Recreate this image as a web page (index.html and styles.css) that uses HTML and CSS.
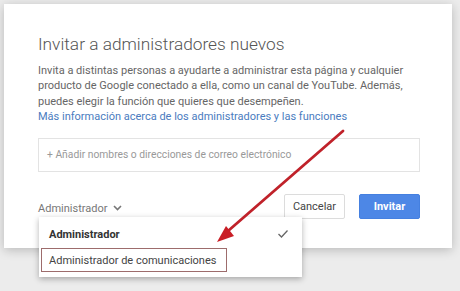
FILE: index.html
```html
<!DOCTYPE html>
<html>
<head lang="es">
    <meta charset="UTF-8">
    <title>Invitar a administradores nuevos</title>
    <link rel="stylesheet" href="styles.css">
</head>
<body>
<main class="dialog">
    <h1 class="title">Invitar a administradores nuevos</h1>
    <p class="intro">
        Invita a distintas personas a ayudarte a administrar esta página y cualquier<br>
        producto de Google conectado a ella, como un canal de YouTube. Además,<br>
        puedes elegir la función que quieres que desempeñen.
        <a class="more" href="#">Más información acerca de los administradores y las funciones</a>
    </p>
    <div class="invitees">+ Añadir nombres o direcciones de correo electrónico</div>
    <div class="actions">
        <div class="role">
            Administrador
            <svg class="chevron" width="9" height="6" viewBox="0 0 9 6">
                <polyline points="1,1 4.5,4.5 8,1" fill="none" stroke="#777" stroke-width="1.6"/>
            </svg>
        </div>
        <button class="btn cancel">Cancelar</button>
        <button class="btn invite">Invitar</button>
    </div>
    <ul class="menu">
        <li class="item selected">
            Administrador
            <svg class="check" width="12" height="10" viewBox="0 0 12 10">
                <polyline points="1.5,5 4.5,8 10.5,1.5" fill="none" stroke="#666" stroke-width="1.3"/>
            </svg>
        </li>
        <li class="item boxed">Administrador de comunicaciones</li>
    </ul>
</main>
<svg class="pointer" width="460" height="291" viewBox="0 0 460 291">
    <line x1="343" y1="131" x2="228" y2="231" stroke="#c0222a" stroke-width="2.8" stroke-linecap="round"/>
    <polygon points="217,242 234,236 226,226" fill="#c91e26"/>
</svg>
</body>
</html>
```

FILE: styles.css
```css
body{
    margin: 0;
    background-color: #ececec;
    font-family: Roboto, "Liberation Sans", sans-serif;
    height: 291px;
    overflow: hidden;
}
.dialog{
    position: relative;
    box-sizing: border-box;
    width: 448px;
    height: 244px;
    margin: 4px 0 0 4px;
    padding: 28px 32px 0 34px;
    background-color: #fff;
    box-shadow: 0 2px 10px rgba(0, 0, 0, 0.22);
}
.title{
    margin: 0;
    font-size: 17.3px;
    line-height: 24px;
    font-weight: 300;
    color: #555;
    white-space: nowrap;
}
.intro{
    margin: 7px 0 0 0;
    font-size: 11px;
    line-height: 15.3px;
    color: #666;
    white-space: nowrap;
}
.more{
    display: block;
    color: #4a7cc0;
    text-decoration: none;
}
.invitees{
    box-sizing: border-box;
    height: 34px;
    margin-top: 14px;
    padding: 0 8px;
    border: 1px solid #e3e3e3;
    font-size: 10.3px;
    line-height: 32px;
    color: #999;
}
.actions{
    display: flex;
    align-items: center;
    margin-top: 22px;
}
.role{
    flex: 1;
    display: flex;
    align-items: center;
    gap: 6px;
    padding-top: 3px;
    font-size: 11px;
    color: #777;
}
.btn{
    box-sizing: border-box;
    width: 61px;
    height: 25px;
    border-radius: 2px;
    font-family: Roboto, "Liberation Sans", sans-serif;
    font-size: 11px;
    padding: 0;
}
.cancel{
    background-color: #fff;
    border: 1px solid #dcdcdc;
    color: #444;
}
.invite{
    margin-left: 14px;
    background-color: #4d87e6;
    border: 1px solid #4580e0;
    color: #fff;
    font-weight: bold;
}
.menu{
    position: absolute;
    left: 35px;
    top: 213px;
    width: 263px;
    box-sizing: border-box;
    margin: 0;
    padding: 0 0 5px 2px;
    list-style: none;
    background-color: #fff;
    box-shadow: 0 2px 6px rgba(0, 0, 0, 0.3);
}
.item{
    display: flex;
    align-items: center;
    font-size: 11px;
    color: #333;
    white-space: nowrap;
}
.selected{
    height: 31px;
    padding: 3px 0 0 8px;
    box-sizing: border-box;
    justify-content: space-between;
    padding-right: 13px;
    font-weight: bold;
}
.boxed{
    width: 186px;
    height: 24px;
    box-sizing: border-box;
    padding-left: 7px;
    padding-top: 1px;
    border: 1px solid #9d6c6c;
    color: #444;
}
.pointer{
    position: absolute;
    top: 0;
    left: 0;
}
```
